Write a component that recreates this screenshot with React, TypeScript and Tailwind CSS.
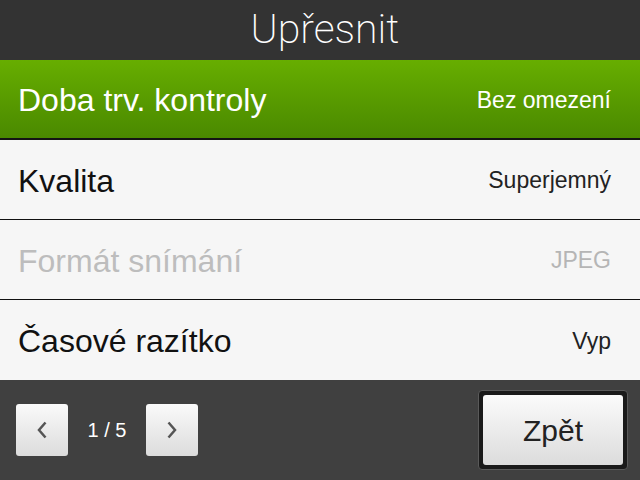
import React from "react";

const rows = [
  { label: "Kvalita", value: "Superjemný", disabled: false },
  { label: "Formát snímání", value: "JPEG", disabled: true },
  { label: "Časové razítko", value: "Vyp", disabled: false },
];

export default function App() {
  return (
    <div className="w-[640px] h-[480px] flex flex-col overflow-hidden bg-[#f6f6f6] font-['Liberation_Sans',Arial,sans-serif]">
      <div className="h-[60px] bg-[#333333] flex items-center justify-center pl-[10px]">
        <span className="text-white text-[41px] font-extralight leading-none font-['Roboto',sans-serif] pb-[2px]">Upřesnit</span>
      </div>
      <div className="h-[80px] flex items-center justify-between pl-[18px] pr-[29px] bg-gradient-to-b from-[#67ae00] to-[#4a8900] border-b-[2px] border-[#141414]">
        <span className="text-white text-[32px] pt-[2px]">Doba trv. kontroly</span>
        <span className="text-white text-[23px] pt-[2px]">Bez omezení</span>
      </div>
      {rows.map((r, i) => (
        <div key={i} className={`h-[80px] flex items-center justify-between pl-[18px] pr-[29px] ${i < rows.length - 1 ? "border-b border-[#111111]" : ""}`}>
          <span className={`text-[32px] pt-[2px] ${r.disabled ? "text-[#bdbdbd]" : "text-[#111111]"}`}>{r.label}</span>
          <span className={`text-[23px] pt-[2px] ${r.disabled ? "text-[#b5b5b5]" : "text-[#222222]"}`}>{r.value}</span>
        </div>
      ))}
      <div className="flex-1 bg-[#404040] flex items-center justify-between pl-[16px] pr-[12px]">
        <div className="flex items-center">
          <button className="w-[52px] h-[52px] rounded-[3px] bg-gradient-to-b from-[#fafafa] to-[#dcdcdc] flex items-center justify-center">
            <svg width="14" height="22" viewBox="0 0 14 22"><path d="M10.5 3.5 L4 11 L10.5 18.5" fill="none" stroke="#555" strokeWidth="2.5" /></svg>
          </button>
          <span className="w-[78px] text-center text-white text-[20px]">1 / 5</span>
          <button className="w-[52px] h-[52px] rounded-[3px] bg-gradient-to-b from-[#fafafa] to-[#dcdcdc] flex items-center justify-center">
            <svg width="14" height="22" viewBox="0 0 14 22"><path d="M3.5 3.5 L10 11 L3.5 18.5" fill="none" stroke="#555" strokeWidth="2.5" /></svg>
          </button>
        </div>
        <div className="w-[150px] h-[80px] rounded-[4px] bg-[#1a1a1a] border border-[#5a5a5a] p-[4px] flex">
          <button className="flex-1 rounded-[3px] bg-gradient-to-b from-[#fbfbfb] to-[#dcdcdc] flex items-center justify-center text-[#222] text-[30px]">Zpět</button>
        </div>
      </div>
    </div>
  );
}
